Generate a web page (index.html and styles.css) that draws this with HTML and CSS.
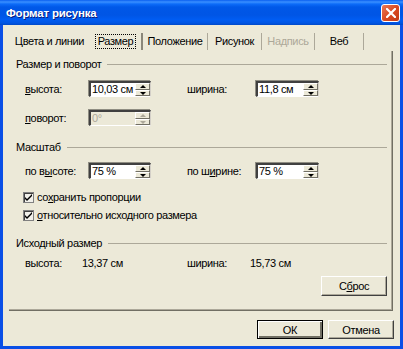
FILE: index.html
```html
<!DOCTYPE html>
<html lang="ru">
<head>
    <meta charset="UTF-8">
    <title>Формат рисунка</title>
    <link rel="stylesheet" href="styles.css">
</head>
<body>
    <div class="window">
        <div class="titlebar">
            <span class="title">Формат рисунка</span>
            <span class="close">
                <svg width="10" height="10" viewBox="0 0 10 10"><path d="M1 1 L9 9 M9 1 L1 9" stroke="#fff" stroke-width="2.2" stroke-linecap="square"/></svg>
            </span>
        </div>
        <div class="client">
            <div class="tabs">
                <div class="tab tab-first">Цвета и линии</div>
                <div class="tab tab-active"><span class="focus">Размер</span></div>
                <div class="tab tab-pos">Положение</div>
                <div class="tab tab-pic">Рисунок</div>
                <div class="tab tab-disabled">Надпись</div>
                <div class="tab tab-web">Веб</div>
            </div>
            <div class="panel">
                <div class="group-head"><span>Размер и поворот</span></div>
                <div class="row row-first">
                    <span><u>в</u>ысота:</span>
                    <div class="spin"><span class="val">10,03 см</span><span class="arrows"><i class="up"></i><i class="down"></i></span></div>
                    <span></span>
                    <span>ширина:</span>
                    <div class="spin"><span class="val">11,8 см</span><span class="arrows"><i class="up"></i><i class="down"></i></span></div>
                </div>
                <div class="row row-rotate">
                    <span><u>п</u>оворот:</span>
                    <div class="spin spin-disabled"><span class="val">0°</span><span class="arrows"><i class="up"></i><i class="down"></i></span></div>
                </div>

                <div class="group-head group-scale"><span>Масштаб</span></div>
                <div class="row row-scale">
                    <span>по в<u>ы</u>соте:</span>
                    <div class="spin"><span class="val">75 %</span><span class="arrows"><i class="up"></i><i class="down"></i></span></div>
                    <span></span>
                    <span>по ш<u>и</u>рине:</span>
                    <div class="spin"><span class="val">75 %</span><span class="arrows"><i class="up"></i><i class="down"></i></span></div>
                </div>
                <div class="check check-first"><span class="box">
                    <svg width="7" height="7" viewBox="0 0 7 7"><path d="M0 3 L2 5 L7 0 L7 2 L2 7 L0 5 Z"/></svg>
                </span><span>со<u>х</u>ранить пропорции</span></div>
                <div class="check"><span class="box">
                    <svg width="7" height="7" viewBox="0 0 7 7"><path d="M0 3 L2 5 L7 0 L7 2 L2 7 L0 5 Z"/></svg>
                </span><span><u>о</u>тносительно исходного размера</span></div>

                <div class="group-head group-orig"><span>Исходный размер</span></div>
                <div class="orig">
                    <span>высота:</span>
                    <span>13,37 см</span>
                    <span>ширина:</span>
                    <span>15,73 см</span>
                </div>
                <div class="reset-line">
                    <button class="btn">С<u>б</u>рос</button>
                </div>
            </div>
            <div class="footer">
                <button class="btn btn-default">ОК</button>
                <button class="btn">Отмена</button>
            </div>
        </div>
    </div>
</body>
</html>
```

FILE: styles.css
```css
* {
    box-sizing: border-box;
}

body {
    margin: 0;
    background-color: #0b4fe0;
    font-family: "Liberation Sans", Arial, sans-serif;
    font-size: 11px;
    letter-spacing: -0.35px;
    color: #000;
}

.window {
    width: 403px;
    height: 349px;
    display: flex;
    flex-direction: column;
    background-color: #0a4fe6;
}

.titlebar {
    height: 25px;
    display: flex;
    align-items: center;
    justify-content: space-between;
    padding: 0 3px 0 6px;
    background: linear-gradient(#0a5ff0 0%, #3a8fff 8%, #0d6cf8 16%, #0058e8 28%, #0055e5 60%, #005cf2 78%, #0055e3 92%, #0049c8 100%);
}

.title {
    color: #fff;
    font-weight: bold;
    font-size: 11.5px;
    letter-spacing: -0.2px;
    text-shadow: 1px 1px #0a1e80;
    padding-top: 1px;
}

.close {
    width: 19px;
    height: 18px;
    margin-top: 1px;
    display: flex;
    align-items: center;
    justify-content: center;
    border: 1px solid #fff;
    border-radius: 3px;
    background: linear-gradient(135deg, #ea7a58, #d8471f 55%, #c23a14);
}

.client {
    flex: 1;
    margin: 0 3px 3px 3px;
    background-color: #ece9d8;
    display: flex;
    flex-direction: column;
}

.tabs {
    display: flex;
    padding: 8px 0 0 6px;
    height: 26px;
}

.tab {
    height: 17px;
    line-height: 17px;
    text-align: center;
    border-right: 1px solid #aca899;
    white-space: nowrap;
}

.tab-first {
    width: 81px;
    border-right: none;
}

.tab-active {
    width: 53px;
    border-right: 2px solid #8a877a;
}

.focus {
    display: inline-block;
    height: 15px;
    line-height: 13px;
    margin-top: 1px;
    padding: 0 2px;
    border: 1px dotted #000;
}

.tab-pos {
    width: 65px;
}

.tab-pic {
    width: 54px;
}

.tab-disabled {
    width: 53px;
    color: #aca899;
}

.tab-web {
    width: 49px;
}

.panel {
    margin: 0 7px 0 6px;
    height: 260px;
    padding: 6px 5px 0 7px;
    border-right: 1px solid #716f64;
    border-bottom: 1px solid #716f64;
    box-shadow: inset -1px -1px #aca899;
}

.group-head {
    display: flex;
    align-items: center;
    height: 14px;
}

.group-head::after {
    content: "";
    flex: 1;
    margin-left: 6px;
    border-top: 1px solid #aca899;
}

.group-scale {
    margin-top: 14px;
}

.group-orig {
    margin-top: 14px;
}

.row {
    display: grid;
    grid-template-columns: 64px 62px 36px 69px 63px;
    align-items: center;
    margin-left: 9px;
    height: 16px;
}

.row-first {
    margin-top: 10px;
}

.row-rotate {
    margin-top: 13px;
}

.row-scale {
    margin-top: 9px;
}

.spin {
    display: flex;
    height: 16px;
    background-color: #fff;
    border-top: 2px solid #404040;
    border-left: 2px solid #404040;
    border-right: 1px solid #d4d0c8;
    border-bottom: 1px solid #fff;
    box-shadow: -1px -1px #8f8d82;
}

.val {
    flex: 1;
    line-height: 13px;
    padding-left: 1px;
    white-space: nowrap;
}

.arrows {
    width: 15px;
    display: flex;
    flex-direction: column;
}

.arrows i {
    flex: 1;
    position: relative;
    background-color: #ece9d8;
    border-top: 1px solid #fff;
    border-left: 1px solid #fff;
    border-right: 1px solid #716f64;
    border-bottom: 1px solid #716f64;
}

.arrows i::after {
    content: "";
    position: absolute;
    left: 4px;
    top: 1px;
    border-left: 3px solid transparent;
    border-right: 3px solid transparent;
}

.arrows .up::after {
    border-bottom: 3px solid #000;
}

.arrows .down::after {
    border-top: 3px solid #000;
}

.spin-disabled {
    background-color: #ece9d8;
    color: #aca899;
}

.spin-disabled .arrows .up::after {
    border-bottom-color: #aca899;
}

.spin-disabled .arrows .down::after {
    border-top-color: #aca899;
}

.check {
    display: flex;
    align-items: center;
    height: 14px;
    margin: 4px 0 0 7px;
}

.check-first {
    margin-top: 11px;
}

.box {
    width: 11px;
    height: 11px;
    margin-right: 3px;
    display: flex;
    align-items: center;
    justify-content: center;
    background-color: #f1f0ea;
    border: 1px solid #808080;
    box-shadow: inset 1px 1px #404040;
}

.box svg path {
    fill: #000;
}

.orig {
    display: grid;
    grid-template-columns: 57px 105px 63px auto;
    align-items: center;
    height: 14px;
    margin: 6px 0 0 9px;
}

.reset-line {
    display: flex;
    justify-content: flex-end;
    margin-top: 6px;
}

.btn {
    width: 66px;
    height: 20px;
    padding: 0;
    font-family: inherit;
    font-size: 11px;
    letter-spacing: inherit;
    color: #000;
    background-color: #ece9d8;
    border-top: 1px solid #fff;
    border-left: 1px solid #fff;
    border-right: 1px solid #404040;
    border-bottom: 1px solid #404040;
    box-shadow: inset -1px -1px #aca899;
}

.footer {
    display: flex;
    justify-content: flex-end;
    gap: 5px;
    margin-top: 9px;
    padding-right: 6px;
}

.footer .btn {
    height: 19px;
}

.btn-default {
    border: 1px solid #000;
    box-shadow: inset 1px 1px #fff, inset -2px -2px #716f64;
}
```
